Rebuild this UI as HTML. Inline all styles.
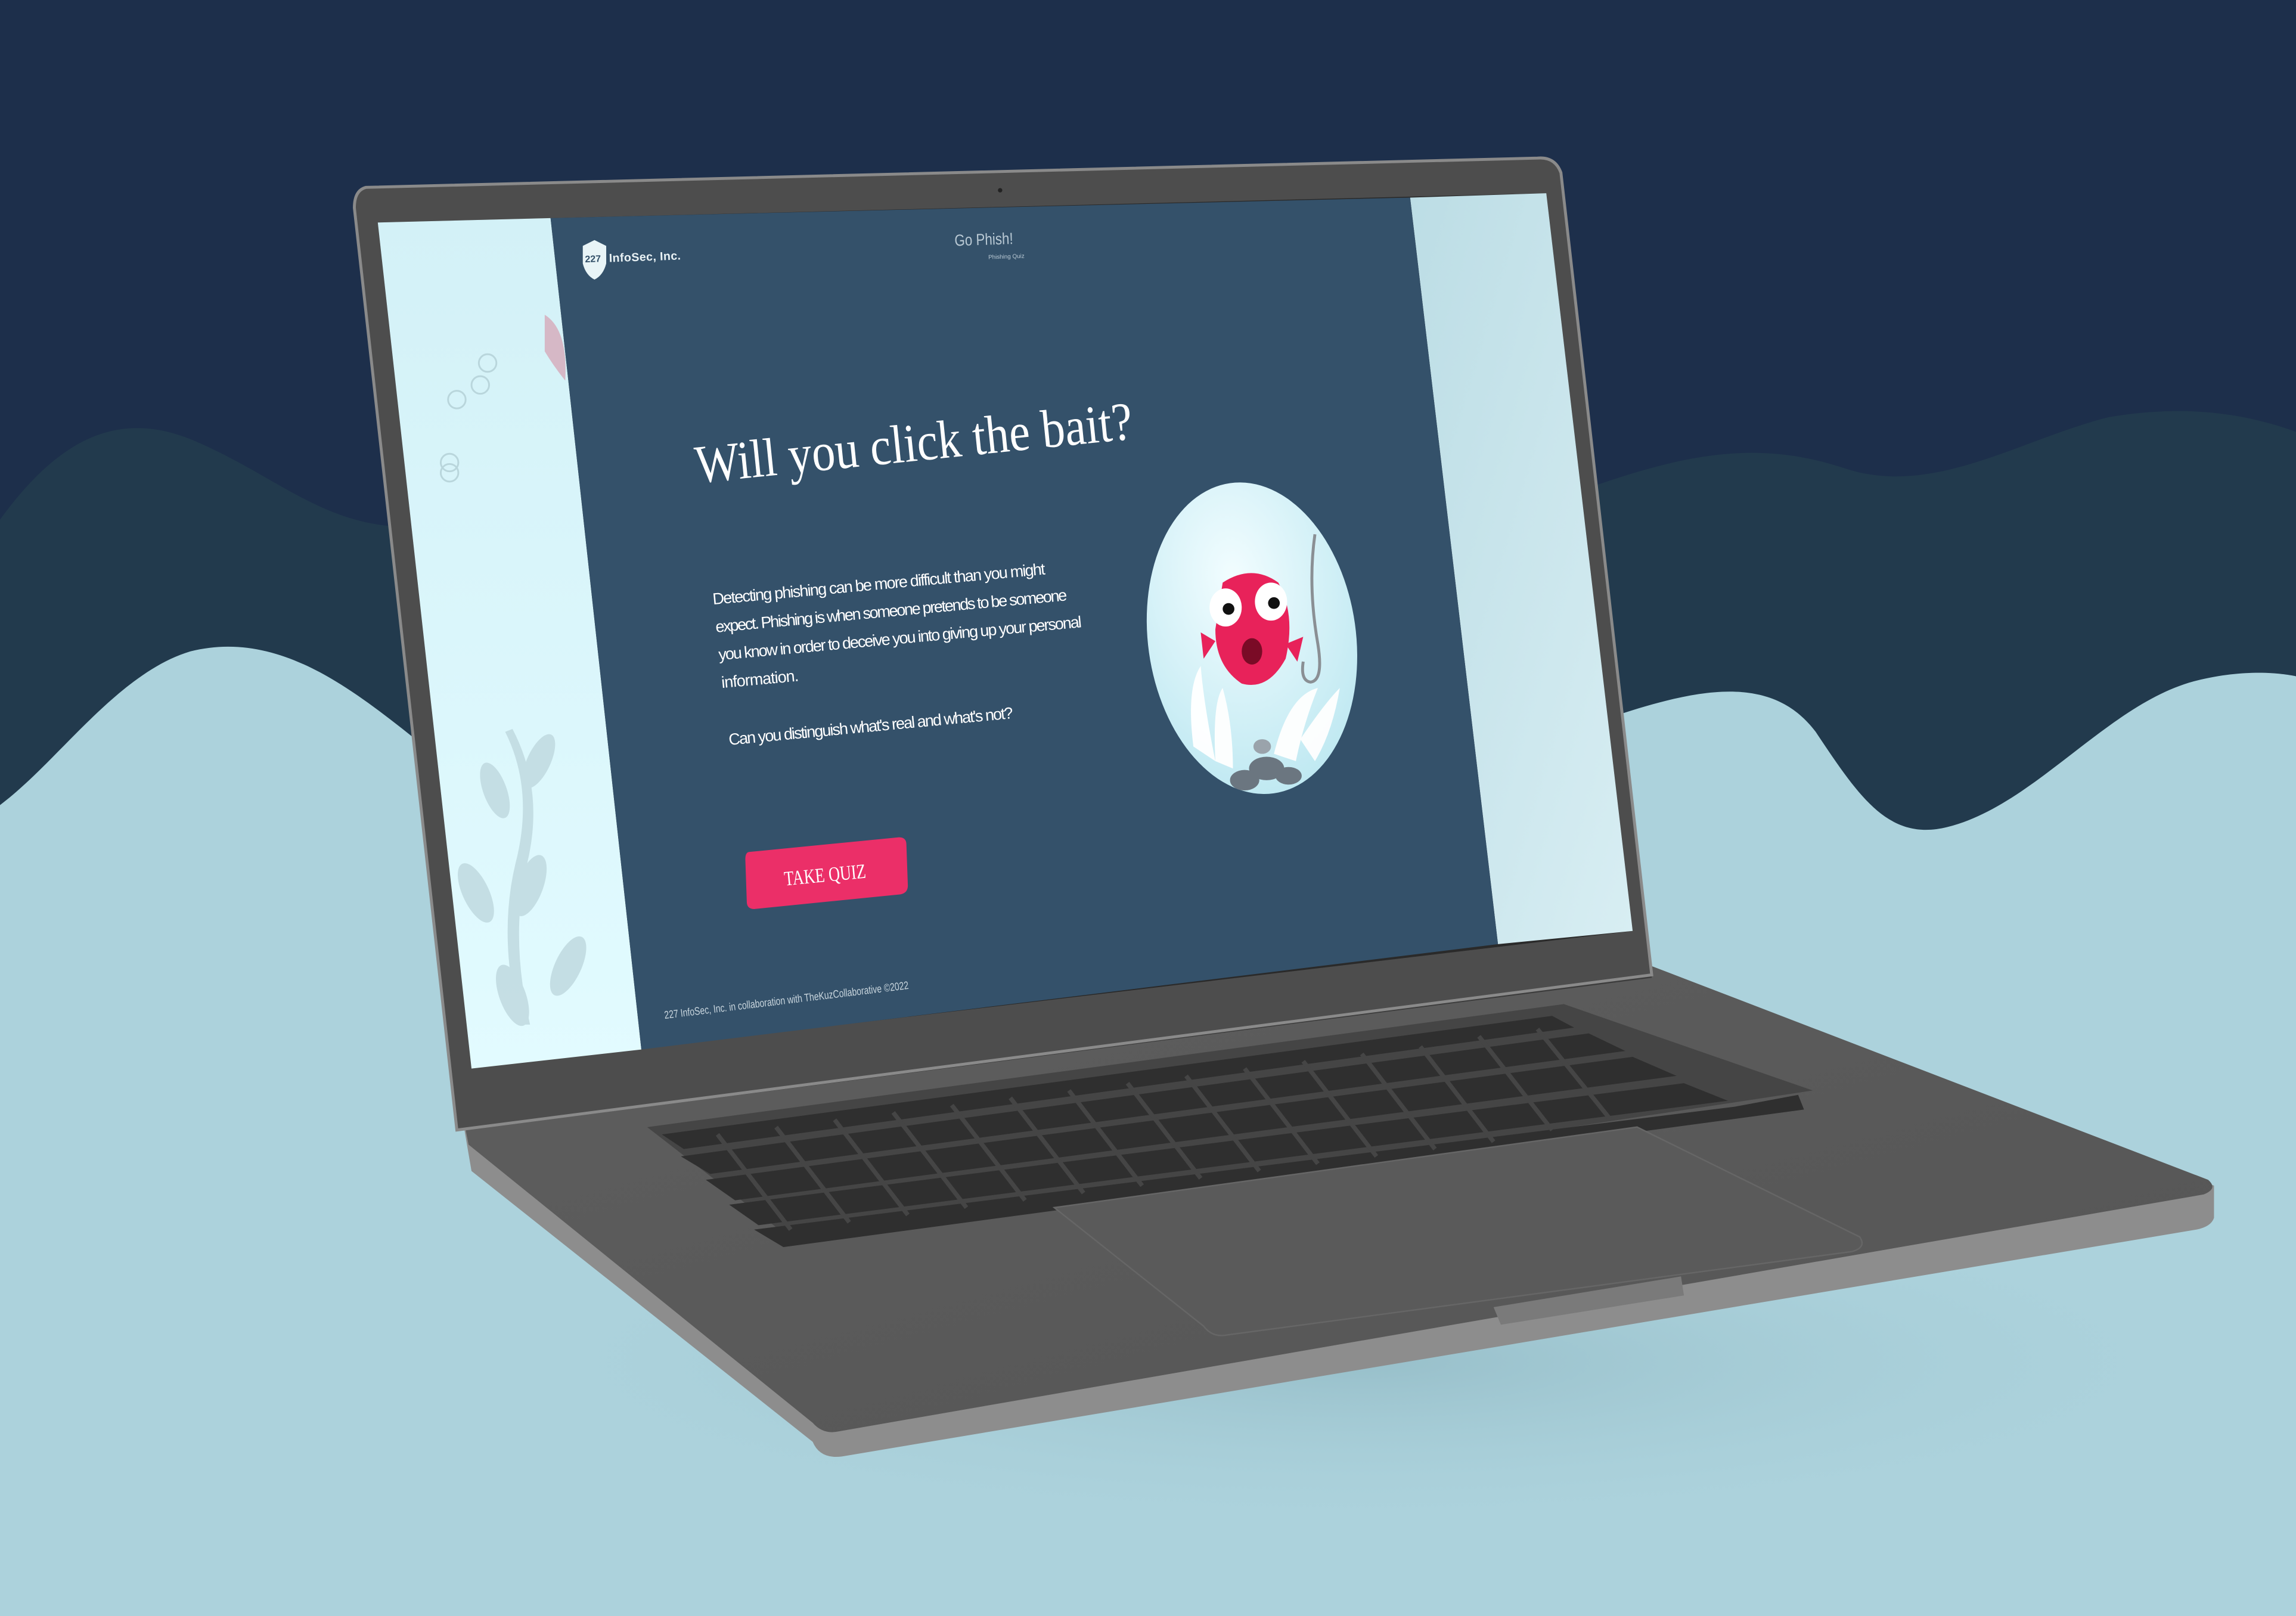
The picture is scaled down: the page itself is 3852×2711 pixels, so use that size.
<!DOCTYPE html>
<html><head><meta charset="utf-8"><style>html,body{margin:0;padding:0;overflow:hidden;background:#1d2f4b}svg{display:block}</style></head>
<body>
<svg width="3852" height="2711" viewBox="0 0 1568 1104" preserveAspectRatio="none" xmlns="http://www.w3.org/2000/svg" font-family="Liberation Sans, sans-serif">
<defs>
<linearGradient id="lp" x1="0" y1="0" x2="0" y2="1"><stop offset="0" stop-color="#d3f1f7"/><stop offset="1" stop-color="#e2fbff"/></linearGradient>
<linearGradient id="rp" x1="0" y1="0" x2="1" y2="1"><stop offset="0" stop-color="#bcdde5"/><stop offset="1" stop-color="#d8eef3"/></linearGradient>
<radialGradient id="fc" cx="0.45" cy="0.3" r="0.8"><stop offset="0" stop-color="#f2fdff"/><stop offset="1" stop-color="#b9e6f0"/></radialGradient>
<linearGradient id="base" x1="0" y1="0" x2="1" y2="1"><stop offset="0" stop-color="#5e5e5e"/><stop offset="1" stop-color="#555"/></linearGradient>
<radialGradient id="sh" cx="0.5" cy="0.5" r="0.5"><stop offset="0" stop-color="#8fb7c2" stop-opacity="0.7"/><stop offset="1" stop-color="#acd2dc" stop-opacity="0"/></radialGradient>
</defs>
<rect width="1568" height="1104" fill="#1d2f4b"/>
<path d="M0 355 C40 300 80 280 130 300 C190 325 220 360 280 360 L420 360 L420 600 L0 600 Z" fill="#223a4d"/>
<path d="M1000 340 L1080 335 C1150 310 1200 300 1260 320 C1320 340 1380 300 1440 285 C1500 275 1540 285 1568 295 L1568 600 L1000 600 Z" fill="#223a4d"/>
<path d="M0 550 C40 520 80 460 130 445 C190 430 240 470 290 510 L420 560 L420 1104 L0 1104 Z" fill="#acd2dc"/>
<path d="M1000 500 L1100 490 C1160 470 1210 460 1240 500 C1270 545 1290 575 1330 565 C1390 550 1440 480 1500 465 C1540 455 1568 462 1568 462 L1568 1104 L1000 1104 Z" fill="#acd2dc"/>
<rect x="0" y="680" width="1568" height="424" fill="#acd2dc"/>
<ellipse cx="930" cy="930" rx="620" ry="120" fill="url(#sh)"/>

<!-- base -->
<path d="M316 765 L1128 662 L1512 810 L1512 832 Q1510 838 1500 840 L575 995 Q560 997 555 985 L322 800 Z" fill="#8d8d8d"/>
<path d="M316 762 L1128 660 L1508 806 Q1515 812 1505 816 L572 978 Q562 980 555 972 L320 782 Z" fill="url(#base)"/>
<path d="M1020 893 L1148 872 L1150 885 L1025 905 Z" fill="#7a7a7a"/>
<!-- keyboard -->
<path d="M442 770 L1068 686 L1238 745 L545 850 Z" fill="#454545"/>
<g fill="#2f2f2f">
<path d="M452 775 L1060 694 L1075 702 L467 785 Z"/>
<path d="M465 790 L1085 706 L1110 718 L485 802 Z"/>
<path d="M482 806 L1115 722 L1145 735 L502 820 Z"/>
<path d="M498 823 L1150 740 L1180 752 L518 837 Z"/>
<path d="M515 840 L1185 756 L1228 748 L1232 758 L535 852 Z"/>
</g>
<g stroke="#454545" stroke-width="3">
<path d="M490 775 L540 840 M530 770 L580 835 M570 765 L620 830 M610 760 L660 825 M650 755 L700 820 M690 750 L740 815 M730 745 L780 810 M770 740 L820 805 M810 735 L860 800 M850 730 L900 795 M890 725 L940 790 M930 720 L980 785 M970 715 L1020 780 M1010 708 L1060 772 M1050 703 L1100 765"/>
</g>
<path d="M720 825 L1118 770 L1270 845 Q1275 852 1265 855 L838 912 Q828 914 822 906 Z" fill="#5a5a5a" stroke="#666" stroke-width="1"/>
<path d="M310 762 L1128 660 L1128 668 L318 772 Z" fill="#3c3c3c"/>

<!-- lid -->
<path d="M250 128 Q242 130 242 142 L312 772 L1128 666 L1066 118 Q1062 107 1050 108 Z" fill="#4d4d4d" stroke="#8a8a8a" stroke-width="2"/>
<circle cx="683" cy="130" r="1.5" fill="#222"/>
<path d="M258 152 L1056 132 L1115 636 L322 730 Z" fill="#2a2a2a"/>
<path d="M258 152 L376 149 L438 717 L322 730 Z" fill="url(#lp)"/>
<path d="M963 135 L1056 132 L1115 636 L1023 645 Z" fill="url(#rp)"/>
<path d="M376 149 L963 135 L1023 645 L438 717 Z" fill="#34516a"/>
<g fill="none" stroke="#b9d6dc" stroke-width="1.2">
<circle cx="312" cy="273" r="6"/><circle cx="328" cy="263" r="6"/><circle cx="333" cy="248" r="6"/>
<circle cx="307" cy="316" r="6"/><circle cx="307" cy="323" r="6"/>
</g>
<path d="M372 215 Q388 225 386 260 Q378 250 372 240 Z" fill="#d6b8c6"/>
<g fill="#c2dce2" opacity="0.9">
<path d="M355 700 Q340 640 352 590 Q365 540 345 500 L350 498 Q372 540 360 590 Q348 640 362 700 Z"/>
<ellipse cx="368" cy="520" rx="8" ry="20" transform="rotate(25 368 520)"/>
<ellipse cx="338" cy="540" rx="8" ry="20" transform="rotate(-20 338 540)"/>
<ellipse cx="362" cy="605" rx="9" ry="22" transform="rotate(20 362 605)"/>
<ellipse cx="325" cy="610" rx="9" ry="22" transform="rotate(-25 325 610)"/>
<ellipse cx="388" cy="660" rx="9" ry="22" transform="rotate(25 388 660)"/>
<ellipse cx="350" cy="680" rx="9" ry="22" transform="rotate(-20 350 680)"/>
</g>

<path d="M398 168 L406 164 L414 168 L414 180 Q412 188 406 191 Q400 188 398 180 Z" fill="#e8f4f7"/>
<text x="399.5" y="179" font-size="6.5" font-weight="bold" fill="#34516a" transform="rotate(-2 406 177)">227</text>
<text x="416" y="179" font-size="8" font-weight="bold" fill="#e8f1f4" textLength="49" transform="rotate(-2 416 179)">InfoSec, Inc.</text>
<text x="652" y="168" font-size="11" fill="#b9c9d4" textLength="40" lengthAdjust="spacingAndGlyphs" transform="rotate(-2 652 168)">Go Phish!</text>
<text x="675" y="177" font-size="4" fill="#b9c9d4" transform="rotate(-2 675 177)">Phishing Quiz</text>

<text x="476" y="330" font-size="37" fill="#ffffff" font-family="Liberation Serif, serif" textLength="300" lengthAdjust="spacingAndGlyphs" transform="rotate(-5.8 476 330)">Will you click the bait?</text>

<g fill="#ffffff" font-size="11" lengthAdjust="spacingAndGlyphs">
<text x="487" y="413" textLength="228" transform="rotate(-5.2 487 413)">Detecting phishing can be more difficult than you might</text>
<text x="489" y="432" textLength="241" transform="rotate(-5.2 489 432)">expect. Phishing is when someone pretends to be someone</text>
<text x="491" y="451" textLength="249" transform="rotate(-5.2 491 451)">you know in order to deceive you into giving up your personal</text>
<text x="493" y="470" textLength="53" transform="rotate(-5.2 493 470)">information.</text>
<text x="498" y="509" textLength="195" transform="rotate(-5.4 498 509)">Can you distinguish what's real and what's not?</text>
</g>

<path d="M512 582 L614 572 Q619 572 619 577 L620 605 Q620 610 615 611 L515 621 Q510 621 510 616 L509 587 Q509 582 512 582 Z" fill="#eb2f68"/>
<text x="536" y="605" font-size="14" fill="#fff" font-family="Liberation Serif, serif" textLength="56" lengthAdjust="spacingAndGlyphs" transform="rotate(-5.5 536 605)">TAKE QUIZ</text>

<text x="454" y="696" font-size="7.5" fill="#c9d6de" textLength="168" lengthAdjust="spacingAndGlyphs" transform="rotate(-7 454 696)">227 InfoSec, Inc. in collaboration with TheKuzCollaborative ©2022</text>

<ellipse cx="855" cy="436" rx="71" ry="107" fill="url(#fc)" transform="rotate(-8 855 436)"/>
<path d="M898 365 Q893 400 900 440 Q904 465 895 466 Q888 465 890 452" fill="none" stroke="#8a8f94" stroke-width="2"/>
<g fill="#ffffff" opacity="0.95">
<path d="M815 510 Q810 470 820 455 Q822 480 830 520 Z"/>
<path d="M830 520 Q828 480 835 470 Q842 495 842 525 Z"/>
<path d="M870 515 Q880 475 900 470 Q890 495 885 520 Z"/>
<path d="M888 505 Q905 480 915 470 Q910 500 898 520 Z"/>
</g>
<g fill="#6b7680">
<ellipse cx="865" cy="525" rx="12" ry="8"/><ellipse cx="850" cy="533" rx="10" ry="7"/><ellipse cx="880" cy="530" rx="9" ry="6"/><ellipse cx="862" cy="510" rx="6" ry="5" fill="#9aa3ab"/>
</g>
<path d="M835 398 Q855 385 873 398 Q885 420 878 450 Q866 472 848 467 Q830 455 830 430 Z" fill="#e8225a"/>
<path d="M830 438 L820 432 L822 450 Z M878 440 L890 435 L886 452 Z" fill="#e8225a"/>
<ellipse cx="837" cy="415" rx="11" ry="13" fill="#fff"/><ellipse cx="868" cy="411" rx="11" ry="13" fill="#fff"/>
<circle cx="839" cy="416" r="4" fill="#111"/><circle cx="870" cy="412" r="4" fill="#111"/>
<ellipse cx="855" cy="445" rx="7" ry="9" fill="#7a0b26"/>
</svg>
</body></html>
